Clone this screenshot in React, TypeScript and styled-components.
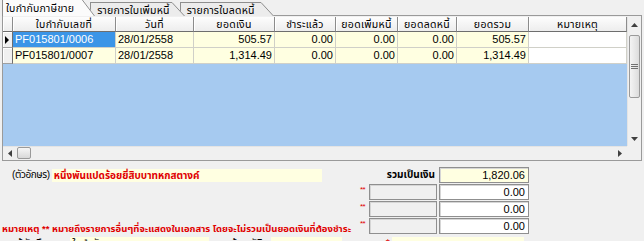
import React from 'react';
import styled, { createGlobalStyle } from 'styled-components';

const GlobalStyle = createGlobalStyle`
  html, body {
    margin: 0;
    padding: 0;
    background: #f0f0f0;
    overflow: hidden;
  }
  body {
    font-family: "Liberation Sans Narrow", "Liberation Sans", "Noto Sans Thai", sans-serif;
    font-size: 11px;
    color: #000;
  }
`;

const COLS = [10, 103, 78, 81, 61, 62, 59, 72, 98];
const HEADERS = ['', 'ใบกำกับเลขที่', 'วันที่', 'ยอดเงิน', 'ชำระแล้ว', 'ยอดเพิ่มหนี้', 'ยอดลดหนี้', 'ยอดรวม', 'หมายเหตุ'];
const ROWS = [
  ['PF015801/0006', '28/01/2558', '505.57', '0.00', '0.00', '0.00', '505.57', ''],
  ['PF015801/0007', '28/01/2558', '1,314.49', '0.00', '0.00', '0.00', '1,314.49', ''],
];

const TABS = [
  { label: 'ใบกำกับภาษีขาย', padRight: 8 },
  { label: 'รายการใบเพิ่มหนี้', padRight: 2 },
  { label: 'รายการใบลดหนี้', padRight: 6 },
];

const Screen = styled.div`
  width: 644px;
  height: 241px;
  overflow: hidden;
  display: flex;
  flex-direction: column;
`;

const TabStrip = styled.div`
  display: flex;
  align-items: flex-end;
  height: 16px;
  padding-left: 2px;
  position: relative;
  z-index: 2;
  margin-bottom: -1px;
`;

const Tab = styled.div<{ $active: boolean; $z: number }>`
  display: flex;
  flex-shrink: 0;
  height: ${(p) => (p.$active ? 17 : 14)}px;
  margin-left: ${(p) => (p.$active ? 0 : -5)}px;
  position: relative;
  z-index: ${(p) => p.$z};
`;

const TabBody = styled.div<{ $active: boolean; $pr: number }>`
  flex-shrink: 0;
  box-sizing: border-box;
  border-left: 1px solid #8e8e8e;
  border-top: 1px solid #8e8e8e;
  background: ${(p) => (p.$active ? '#fbfbfb' : '#ececec')};
  padding: ${(p) => (p.$active ? `2px ${p.$pr}px 0 3px` : `1px ${p.$pr}px 0 6px`)};
  font-size: 10.5px;
  letter-spacing: 0.2px;
  line-height: 12px;
  white-space: nowrap;
`;

const SlantSvg = styled.svg`
  flex-shrink: 0;
  display: block;
`;

const TabSlant = ({ h, active }: { h: number; active: boolean }) => (
  <SlantSvg width="13" height={h}>
    <polygon points={`0,0 0.5,0 13,${h} 0,${h}`} fill={active ? '#fbfbfb' : '#ececec'} />
    <line x1="0" y1="0.5" x2="12.5" y2={h} stroke="#8e8e8e" />
  </SlantSvg>
);

const Panel = styled.div`
  margin: 0 2px;
  border: 1px solid #9a9a9a;
  padding: 1px 0;
  background: #f0f0f0;
  display: flex;
  flex-direction: column;
`;

const GridBody = styled.div`
  display: flex;
  height: 129px;
`;

const Table = styled.div`
  width: 624px;
  display: flex;
  flex-direction: column;
  background: #a6caf0;
`;

const Row = styled.div<{ $h: number }>`
  display: grid;
  grid-template-columns: ${COLS.map((c) => `${c}px`).join(' ')};
  height: ${(p) => p.$h}px;
`;

const HeadCell = styled.div`
  box-sizing: border-box;
  background: linear-gradient(#fdfdfd, #ededed);
  border-right: 1px solid #8c8c8c;
  border-bottom: 1px solid #6e6e6e;
  box-shadow: inset 1px 0 #ffffff;
  text-align: center;
  font-size: 10.5px;
  letter-spacing: 0.3px;
  line-height: 14px;
  white-space: nowrap;
  overflow: hidden;
`;

const Indicator = styled.div`
  box-sizing: border-box;
  background: #f0f0f0;
  border-right: 1px solid #6e6e6e;
  border-bottom: 1px solid #a0a0a0;
  box-shadow: inset 1px 1px #ffffff;
  display: flex;
  align-items: center;
  padding-left: 2px;
`;

const Arrow = styled.span`
  width: 0;
  height: 0;
  border-top: 4px solid transparent;
  border-bottom: 4px solid transparent;
  border-left: 4px solid #000;
`;

const Cell = styled.div<{ $bg: string; $right: boolean; $sel?: boolean }>`
  box-sizing: border-box;
  background: ${(p) => p.$bg};
  color: ${(p) => (p.$sel ? '#fff' : '#000')};
  border-right: 1px solid #d0d0c8;
  border-bottom: 1px solid #d0d0c8;
  text-align: ${(p) => (p.$right ? 'right' : 'left')};
  padding: 0 2px;
  line-height: 15px;
  font-size: 11px;
  white-space: nowrap;
  overflow: hidden;
`;

const VScroll = styled.div`
  width: 14px;
  display: flex;
  flex-direction: column;
  background: #f0f0f0;
  border-left: 1px solid #e4e4e4;
  box-sizing: border-box;
`;

const ScrollBtn = styled.div<{ $size: number }>`
  flex: 0 0 ${(p) => p.$size}px;
  display: flex;
  align-items: center;
  justify-content: center;
`;

const Track = styled.div`
  flex: 1;
  padding-top: 2px;
`;

const VThumb = styled.div`
  height: 61px;
  margin: 0 1px;
  border: 1px solid #9a9a9a;
  border-radius: 2px;
  background: linear-gradient(90deg, #f4f4f4, #dcdcdc);
  display: flex;
  align-items: center;
  justify-content: center;
`;

const HScrollRow = styled.div`
  display: flex;
  height: 13px;
`;

const HScroll = styled.div`
  width: 624px;
  display: flex;
  align-items: center;
  background: #f0f0f0;
  border-top: 1px solid #e4e4e4;
  box-sizing: border-box;
`;

const HThumb = styled.div`
  width: 12px;
  height: 10px;
  border: 1px solid #9a9a9a;
  border-radius: 2px;
  background: linear-gradient(#f6f6f6, #d8d8d8);
`;

const HSpacer = styled.div`
  flex: 1;
`;

const Corner = styled.div`
  width: 14px;
  background: #f0f0f0;
`;

const Summary = styled.div`
  margin: 6px 0 0 2px;
  display: grid;
  grid-template-columns: 358px 9px 70px 90px;
  grid-auto-rows: 16px;
  row-gap: 1px;
  font-size: 10.5px;
`;

const WordsRow = styled.div`
  display: flex;
  align-items: center;
  padding-left: 10px;
  gap: 2px;
`;

const Label = styled.span`
  white-space: nowrap;
  font-size: 10px;
  letter-spacing: -0.4px;
`;

const WordsBox = styled.div`
  width: 270px;
  height: 13px;
  background: #ffffe1;
  color: #e00000;
  font-weight: bold;
  font-size: 10px;
  line-height: 13px;
  padding-left: 2px;
  box-sizing: border-box;
  white-space: nowrap;
`;

const TotalLabel = styled.div`
  grid-column: 2 / span 2;
  text-align: right;
  padding-right: 4px;
  line-height: 16px;
  font-weight: bold;
  font-size: 10px;
`;

const ValueBox = styled.div<{ $bg: string }>`
  box-sizing: border-box;
  border: 1px solid #8f8f8f;
  box-shadow: inset 1px 1px #d6d6d6;
  background: ${(p) => p.$bg};
  text-align: right;
  padding-right: 3px;
  line-height: 14px;
  font-size: 11px;
`;

const GrayBox = styled.div`
  width: 68px;
  box-sizing: border-box;
  border: 1px solid #8f8f8f;
  box-shadow: inset 1px 1px #d6d6d6;
  background: #f0f0f0;
`;

const Mark = styled.div`
  color: #e00000;
  font-family: "Liberation Sans", sans-serif;
  font-size: 8px;
  line-height: 8px;
  padding-top: 2px;
  letter-spacing: -0.5px;
`;

const Note = styled.div`
  color: #e00000;
  font-weight: bold;
  font-size: 9.5px;
  line-height: 12px;
  white-space: nowrap;
  padding-top: 5px;
`;

const FooterRow = styled.div`
  grid-column: 1 / -1;
  display: flex;
  align-items: flex-start;
  margin-top: 2px;
  font-size: 10.5px;
`;

const FooterBox = styled.div<{ $w: number; $ml: number }>`
  width: ${(p) => p.$w}px;
  margin-left: ${(p) => p.$ml}px;
  height: 13px;
  background: #ffffe1;
  padding-left: 2px;
  line-height: 13px;
  box-sizing: border-box;
`;

const FooterLabel = styled.span<{ $ml: number; $red?: boolean }>`
  margin-left: ${(p) => p.$ml}px;
  color: ${(p) => (p.$red ? '#e00000' : '#000')};
  line-height: 13px;
`;

const Tri = ({ dir }: { dir: 'up' | 'down' | 'left' | 'right' }) => {
  const pts = {
    up: '0,4 7,4 3.5,0',
    down: '0,0 7,0 3.5,4',
    left: '4,0 4,7 0,3.5',
    right: '0,0 0,7 4,3.5',
  }[dir];
  const vertical = dir === 'up' || dir === 'down';
  return (
    <svg width={vertical ? 7 : 4} height={vertical ? 4 : 7}>
      <polygon points={pts} fill="#404040" />
    </svg>
  );
};

const Grip = () => (
  <svg width="7" height="6">
    <path d="M0 0.5H7M0 2.5H7M0 4.5H7" stroke="#707070" />
  </svg>
);

export default function App() {
  return (
    <Screen>
      <GlobalStyle />
      <TabStrip>
        {TABS.map((t, i) => {
          const active = i === 0;
          return (
            <Tab key={t.label} $active={active} $z={3 - i}>
              <TabBody $active={active} $pr={t.padRight}>
                {t.label}
              </TabBody>
              <TabSlant h={active ? 17 : 14} active={active} />
            </Tab>
          );
        })}
      </TabStrip>
      <Panel>
        <GridBody>
          <Table>
            <Row $h={15}>
              {HEADERS.map((h, i) => (
                <HeadCell key={i}>{h}</HeadCell>
              ))}
            </Row>
            {ROWS.map((r, ri) => (
              <Row key={ri} $h={16}>
                <Indicator>{ri === 0 && <Arrow />}</Indicator>
                {r.map((v, ci) => {
                  const sel = ri === 0 && ci === 0;
                  const bg = sel ? '#3b95e7' : ci === 7 ? '#ffffff' : '#ffffe1';
                  return (
                    <Cell key={ci} $bg={bg} $right={ci >= 2} $sel={sel}>
                      {v}
                    </Cell>
                  );
                })}
              </Row>
            ))}
          </Table>
          <VScroll>
            <ScrollBtn $size={16}>
              <Tri dir="up" />
            </ScrollBtn>
            <Track>
              <VThumb>
                <Grip />
              </VThumb>
            </Track>
            <ScrollBtn $size={14}>
              <Tri dir="down" />
            </ScrollBtn>
          </VScroll>
        </GridBody>
        <HScrollRow>
          <HScroll>
            <ScrollBtn $size={14}>
              <Tri dir="left" />
            </ScrollBtn>
            <HThumb />
            <HSpacer />
            <ScrollBtn $size={14}>
              <Tri dir="right" />
            </ScrollBtn>
          </HScroll>
          <Corner />
        </HScrollRow>
      </Panel>
      <Summary>
        <WordsRow>
          <Label>(ตัวอักษร)</Label>
          <WordsBox>หนึ่งพันแปดร้อยยี่สิบบาทหกสตางค์</WordsBox>
        </WordsRow>
        <TotalLabel>รวมเป็นเงิน</TotalLabel>
        <ValueBox $bg="#ffffe1">1,820.06</ValueBox>

        <div />
        <Mark>**</Mark>
        <GrayBox />
        <ValueBox $bg="#ffffff">0.00</ValueBox>

        <div />
        <Mark>**</Mark>
        <GrayBox />
        <ValueBox $bg="#ffffff">0.00</ValueBox>

        <Note>หมายเหตุ ** หมายถึงรายการอื่นๆที่จะแสดงในเอกสาร โดยจะไม่รวมเป็นยอดเงินที่ต้องชำระ</Note>
        <Mark>**</Mark>
        <GrayBox />
        <ValueBox $bg="#ffffff">0.00</ValueBox>

        <FooterRow>
          <FooterLabel $ml={14}>ผู้บันทึก</FooterLabel>
          <FooterBox $w={139} $ml={22}>ใบสำคัญ</FooterBox>
          <FooterLabel $ml={21}>ผู้อนุมัติ</FooterLabel>
          <FooterBox $w={71} $ml={8} />
          <FooterLabel $ml={44} $red>
            *
          </FooterLabel>
          <FooterBox $w={132} $ml={2} />
        </FooterRow>
      </Summary>
    </Screen>
  );
}
